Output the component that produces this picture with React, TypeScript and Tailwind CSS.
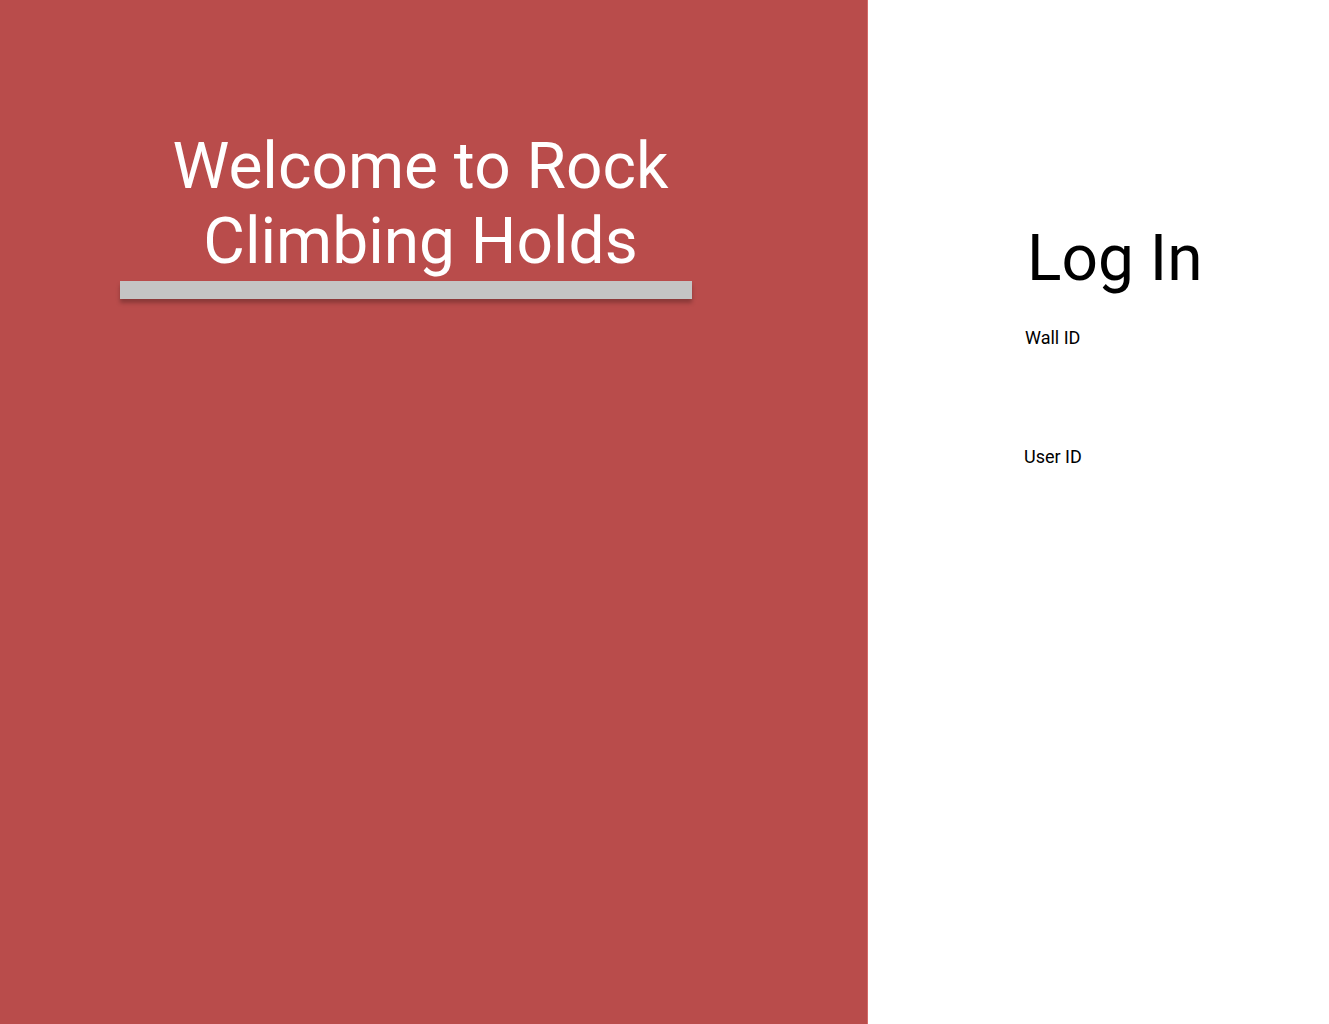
export default function App() {
  return (
    <div className="flex min-h-screen w-full font-['Roboto',sans-serif]">
      <div className="w-[868px] shrink-0 bg-[#b94c4b] border-r border-r-[#d46a68] min-h-[1024px]">
        <div className="w-[572px] ml-[120px] pt-[129px]">
          <h1 className="text-white text-[64px] leading-[75px] font-normal text-center pl-[29px]">
            Welcome to Rock
            <br />
            Climbing Holds
          </h1>
          <div className="mt-[2px] h-[18px] bg-[#c4c4c4] shadow-[0_4px_4px_rgba(0,0,0,0.25)]" />
        </div>
      </div>
      <div className="flex-1 bg-white">
        <div className="pl-[157px] pt-[221px]">
          <h2 className="text-black text-[64px] leading-[75px] font-normal ml-[2px]">Log In</h2>
          <div className="mt-[31px] text-[18px] leading-[21px] text-black">Wall ID</div>
          <div className="mt-[98px] text-[18px] leading-[21px] text-black -ml-[1px]">User ID</div>
        </div>
      </div>
    </div>
  );
}
